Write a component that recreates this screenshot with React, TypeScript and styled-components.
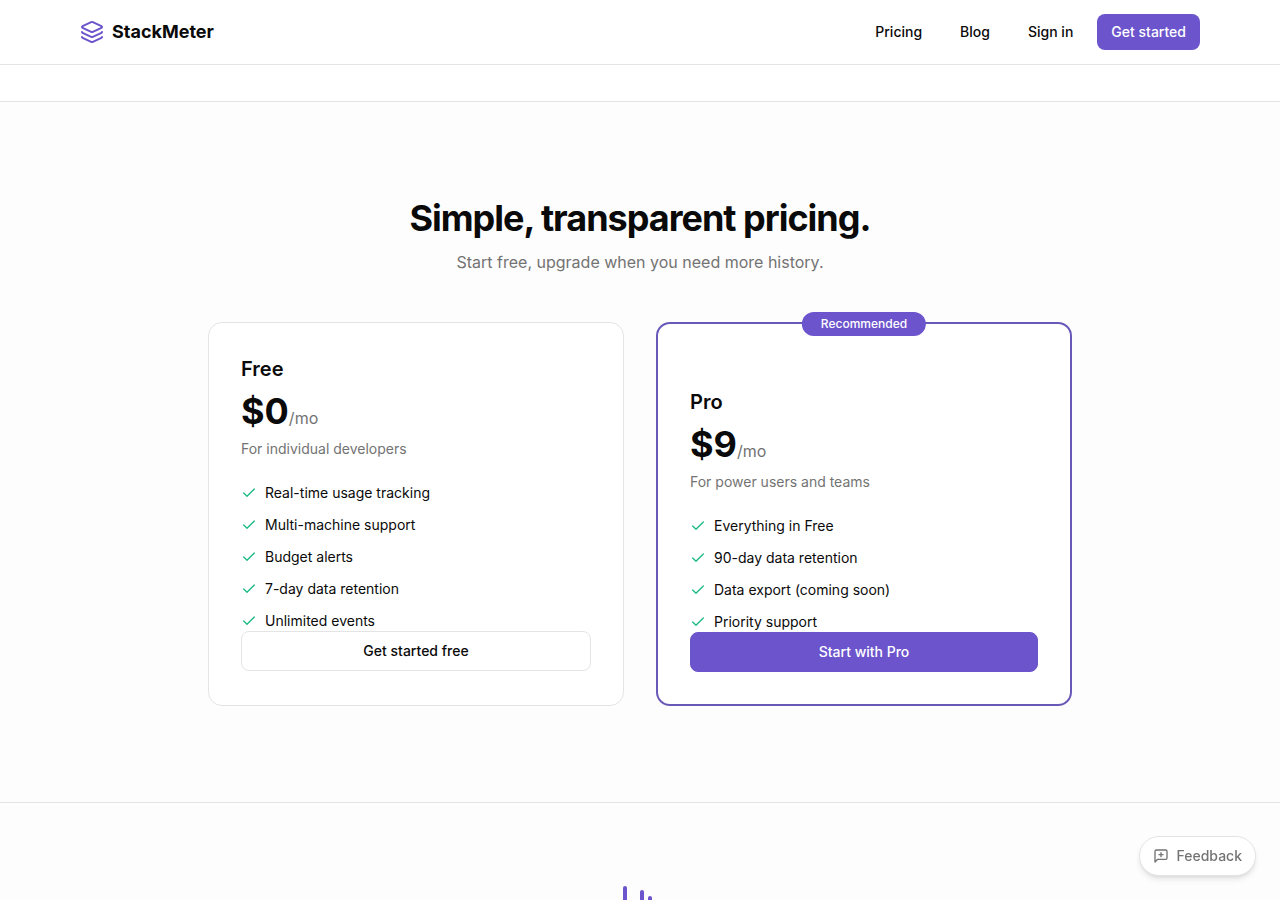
import React from "react";
import styled, { createGlobalStyle, css } from "styled-components";
import { Check, Layers } from "lucide-react";

const color = {
  brand: "#6c54cd",
  brandLine: "#6a58b8",
  ink: "#0a0a0a",
  muted: "#737373",
  line: "#e4e4e4",
  page: "#fdfdfd",
  green: "#1dba83",
};

const GlobalStyle = createGlobalStyle`
  *, *::before, *::after { box-sizing: border-box; }
  body {
    margin: 0;
    background: ${color.page};
    color: ${color.ink};
    font-family: Inter, "Liberation Sans", sans-serif;
    font-size: 16px;
    line-height: 24px;
  }
  h2, h3, p, ul { margin: 0; padding: 0; }
  a { color: inherit; text-decoration: none; }
`;

const Header = styled.header`
  background: #fff;
  border-bottom: 1px solid ${color.line};
`;

const HeaderInner = styled.div`
  display: flex;
  align-items: center;
  justify-content: space-between;
  max-width: 1152px;
  height: 64px;
  margin: 0 auto;
  padding: 0 16px;
`;

const Brand = styled.a`
  display: flex;
  align-items: center;
  gap: 8px;
  font-size: 18px;
  font-weight: 700;
  line-height: 28px;

  svg { color: ${color.brand}; }
`;

const Nav = styled.nav`
  display: flex;
  align-items: center;
  gap: 10px;
`;

const NavLink = styled.a<{ $primary?: boolean }>`
  padding: 8px 14px;
  border-radius: 8px;
  font-size: 14px;
  font-weight: 500;
  line-height: 20px;
  ${(p) => p.$primary && css`
    background: ${color.brand};
    color: #fff;
  `}
`;

const Strip = styled.div`
  height: 37px;
  background: #fff;
  border-bottom: 1px solid ${color.line};
`;

const PricingSection = styled.section`
  padding: 96px 16px;
  border-bottom: 1px solid ${color.line};
`;

const PricingInner = styled.div`
  max-width: 864px;
  margin: 0 auto;
`;

const Heading = styled.h2`
  font-size: 36px;
  font-weight: 700;
  line-height: 40px;
  letter-spacing: -1px;
  text-align: center;
`;

const Lead = styled.p`
  margin: 12px 0 48px;
  color: ${color.muted};
  text-align: center;
`;

const Plans = styled.div`
  display: grid;
  grid-template-columns: repeat(auto-fit, minmax(320px, 1fr));
  gap: 32px;
`;

const Card = styled.article<{ $featured?: boolean }>`
  position: relative;
  padding: 32px;
  background: #fff;
  border: ${(p) => (p.$featured ? `2px solid ${color.brandLine}` : `1px solid ${color.line}`)};
  border-radius: 14px;
`;

const Badge = styled.span`
  position: absolute;
  top: -12px;
  left: 50%;
  transform: translateX(-50%);
  padding: 4px 19px;
  border-radius: 12px;
  background: ${color.brand};
  color: #fff;
  font-size: 12px;
  font-weight: 500;
  line-height: 16px;
`;

const PlanHead = styled.div<{ $featured?: boolean }>`
  display: flex;
  flex-direction: column;
  gap: 8px;
  padding-top: ${(p) => (p.$featured ? "32px" : "0")};
`;

const PlanName = styled.h3`
  font-size: 20px;
  font-weight: 600;
  line-height: 28px;
`;

const Price = styled.p`
  font-size: 36px;
  font-weight: 700;
  line-height: 40px;
`;

const Period = styled.span`
  color: ${color.muted};
  font-size: 16px;
  font-weight: 400;
  line-height: 24px;
`;

const Note = styled.p`
  color: ${color.muted};
  font-size: 14px;
  line-height: 20px;
`;

const Features = styled.ul`
  display: flex;
  flex-direction: column;
  gap: 12px;
  margin-top: 24px;
  list-style: none;
`;

const Feature = styled.li`
  display: flex;
  align-items: center;
  gap: 8px;
  font-size: 14px;
  line-height: 20px;

  svg { flex: none; color: ${color.green}; }
`;

const PlanButton = styled.button<{ $featured?: boolean }>`
  display: block;
  width: 100%;
  height: 40px;
  padding: 0 16px;
  border: 1px solid ${(p) => (p.$featured ? color.brand : color.line)};
  border-radius: 8px;
  background: ${(p) => (p.$featured ? color.brand : "#fff")};
  color: ${(p) => (p.$featured ? "#fff" : color.ink)};
  font: inherit;
  font-size: 14px;
  font-weight: 500;
  line-height: 20px;
  cursor: pointer;
`;

const ClosingSection = styled.section`
  display: flex;
  justify-content: center;
  height: 97px;
  padding-top: 80px;
  overflow: hidden;
`;

const FeedbackButton = styled.button`
  position: fixed;
  right: 24px;
  bottom: 24px;
  display: flex;
  align-items: center;
  gap: 8px;
  height: 40px;
  padding: 0 13px;
  border: 1px solid ${color.line};
  border-radius: 20px;
  background: #fff;
  color: ${color.muted};
  box-shadow: 0 4px 6px -1px rgba(0, 0, 0, 0.1), 0 2px 4px -2px rgba(0, 0, 0, 0.1);
  font: inherit;
  font-size: 14px;
  font-weight: 500;
  line-height: 20px;
  cursor: pointer;
`;

type Plan = {
  name: string;
  price: string;
  note: string;
  features: string[];
  action: string;
  featured?: boolean;
};

const plans: Plan[] = [
  {
    name: "Free",
    price: "$0",
    note: "For individual developers",
    features: [
      "Real-time usage tracking",
      "Multi-machine support",
      "Budget alerts",
      "7-day data retention",
      "Unlimited events",
    ],
    action: "Get started free",
  },
  {
    name: "Pro",
    price: "$9",
    note: "For power users and teams",
    features: [
      "Everything in Free",
      "90-day data retention",
      "Data export (coming soon)",
      "Priority support",
    ],
    action: "Start with Pro",
    featured: true,
  },
];

function PlanCard({ plan }: { plan: Plan }) {
  return (
    <Card $featured={plan.featured}>
      {plan.featured && <Badge>Recommended</Badge>}
      <PlanHead $featured={plan.featured}>
        <PlanName>{plan.name}</PlanName>
        <Price>
          {plan.price}
          <Period>/mo</Period>
        </Price>
        <Note>{plan.note}</Note>
      </PlanHead>
      <Features>
        {plan.features.map((text) => (
          <Feature key={text}>
            <Check size={16} aria-hidden />
            {text}
          </Feature>
        ))}
      </Features>
      <PlanButton type="button" $featured={plan.featured}>
        {plan.action}
      </PlanButton>
    </Card>
  );
}

function BarsMark() {
  return (
    <svg width="48" height="48" viewBox="0 0 48 48" fill="none" stroke={color.brand} strokeWidth="4" strokeLinecap="round" aria-hidden>
      <path d="M9 5v36M26 9v32M34 15v26" />
    </svg>
  );
}

function FeedbackIcon() {
  return (
    <svg width="16" height="16" viewBox="0 0 24 24" fill="none" stroke="currentColor" strokeWidth="2" strokeLinecap="round" strokeLinejoin="round" aria-hidden>
      <path d="M21 15a2 2 0 0 1-2 2H7l-4 4V5a2 2 0 0 1 2-2h14a2 2 0 0 1 2 2z" />
      <path d="M12 7v6M9 10h6" />
    </svg>
  );
}

export default function App() {
  return (
    <>
      <GlobalStyle />
      <Header>
        <HeaderInner>
          <Brand href="#">
            <Layers size={24} aria-hidden />
            StackMeter
          </Brand>
          <Nav>
            <NavLink href="#pricing">Pricing</NavLink>
            <NavLink href="#blog">Blog</NavLink>
            <NavLink href="#signin">Sign in</NavLink>
            <NavLink href="#start" $primary>
              Get started
            </NavLink>
          </Nav>
        </HeaderInner>
      </Header>
      <main>
        <Strip />
        <PricingSection id="pricing">
          <PricingInner>
            <Heading>Simple, transparent pricing.</Heading>
            <Lead>Start free, upgrade when you need more history.</Lead>
            <Plans>
              {plans.map((plan) => (
                <PlanCard key={plan.name} plan={plan} />
              ))}
            </Plans>
          </PricingInner>
        </PricingSection>
        <ClosingSection>
          <BarsMark />
        </ClosingSection>
      </main>
      <FeedbackButton type="button">
        <FeedbackIcon />
        Feedback
      </FeedbackButton>
    </>
  );
}
